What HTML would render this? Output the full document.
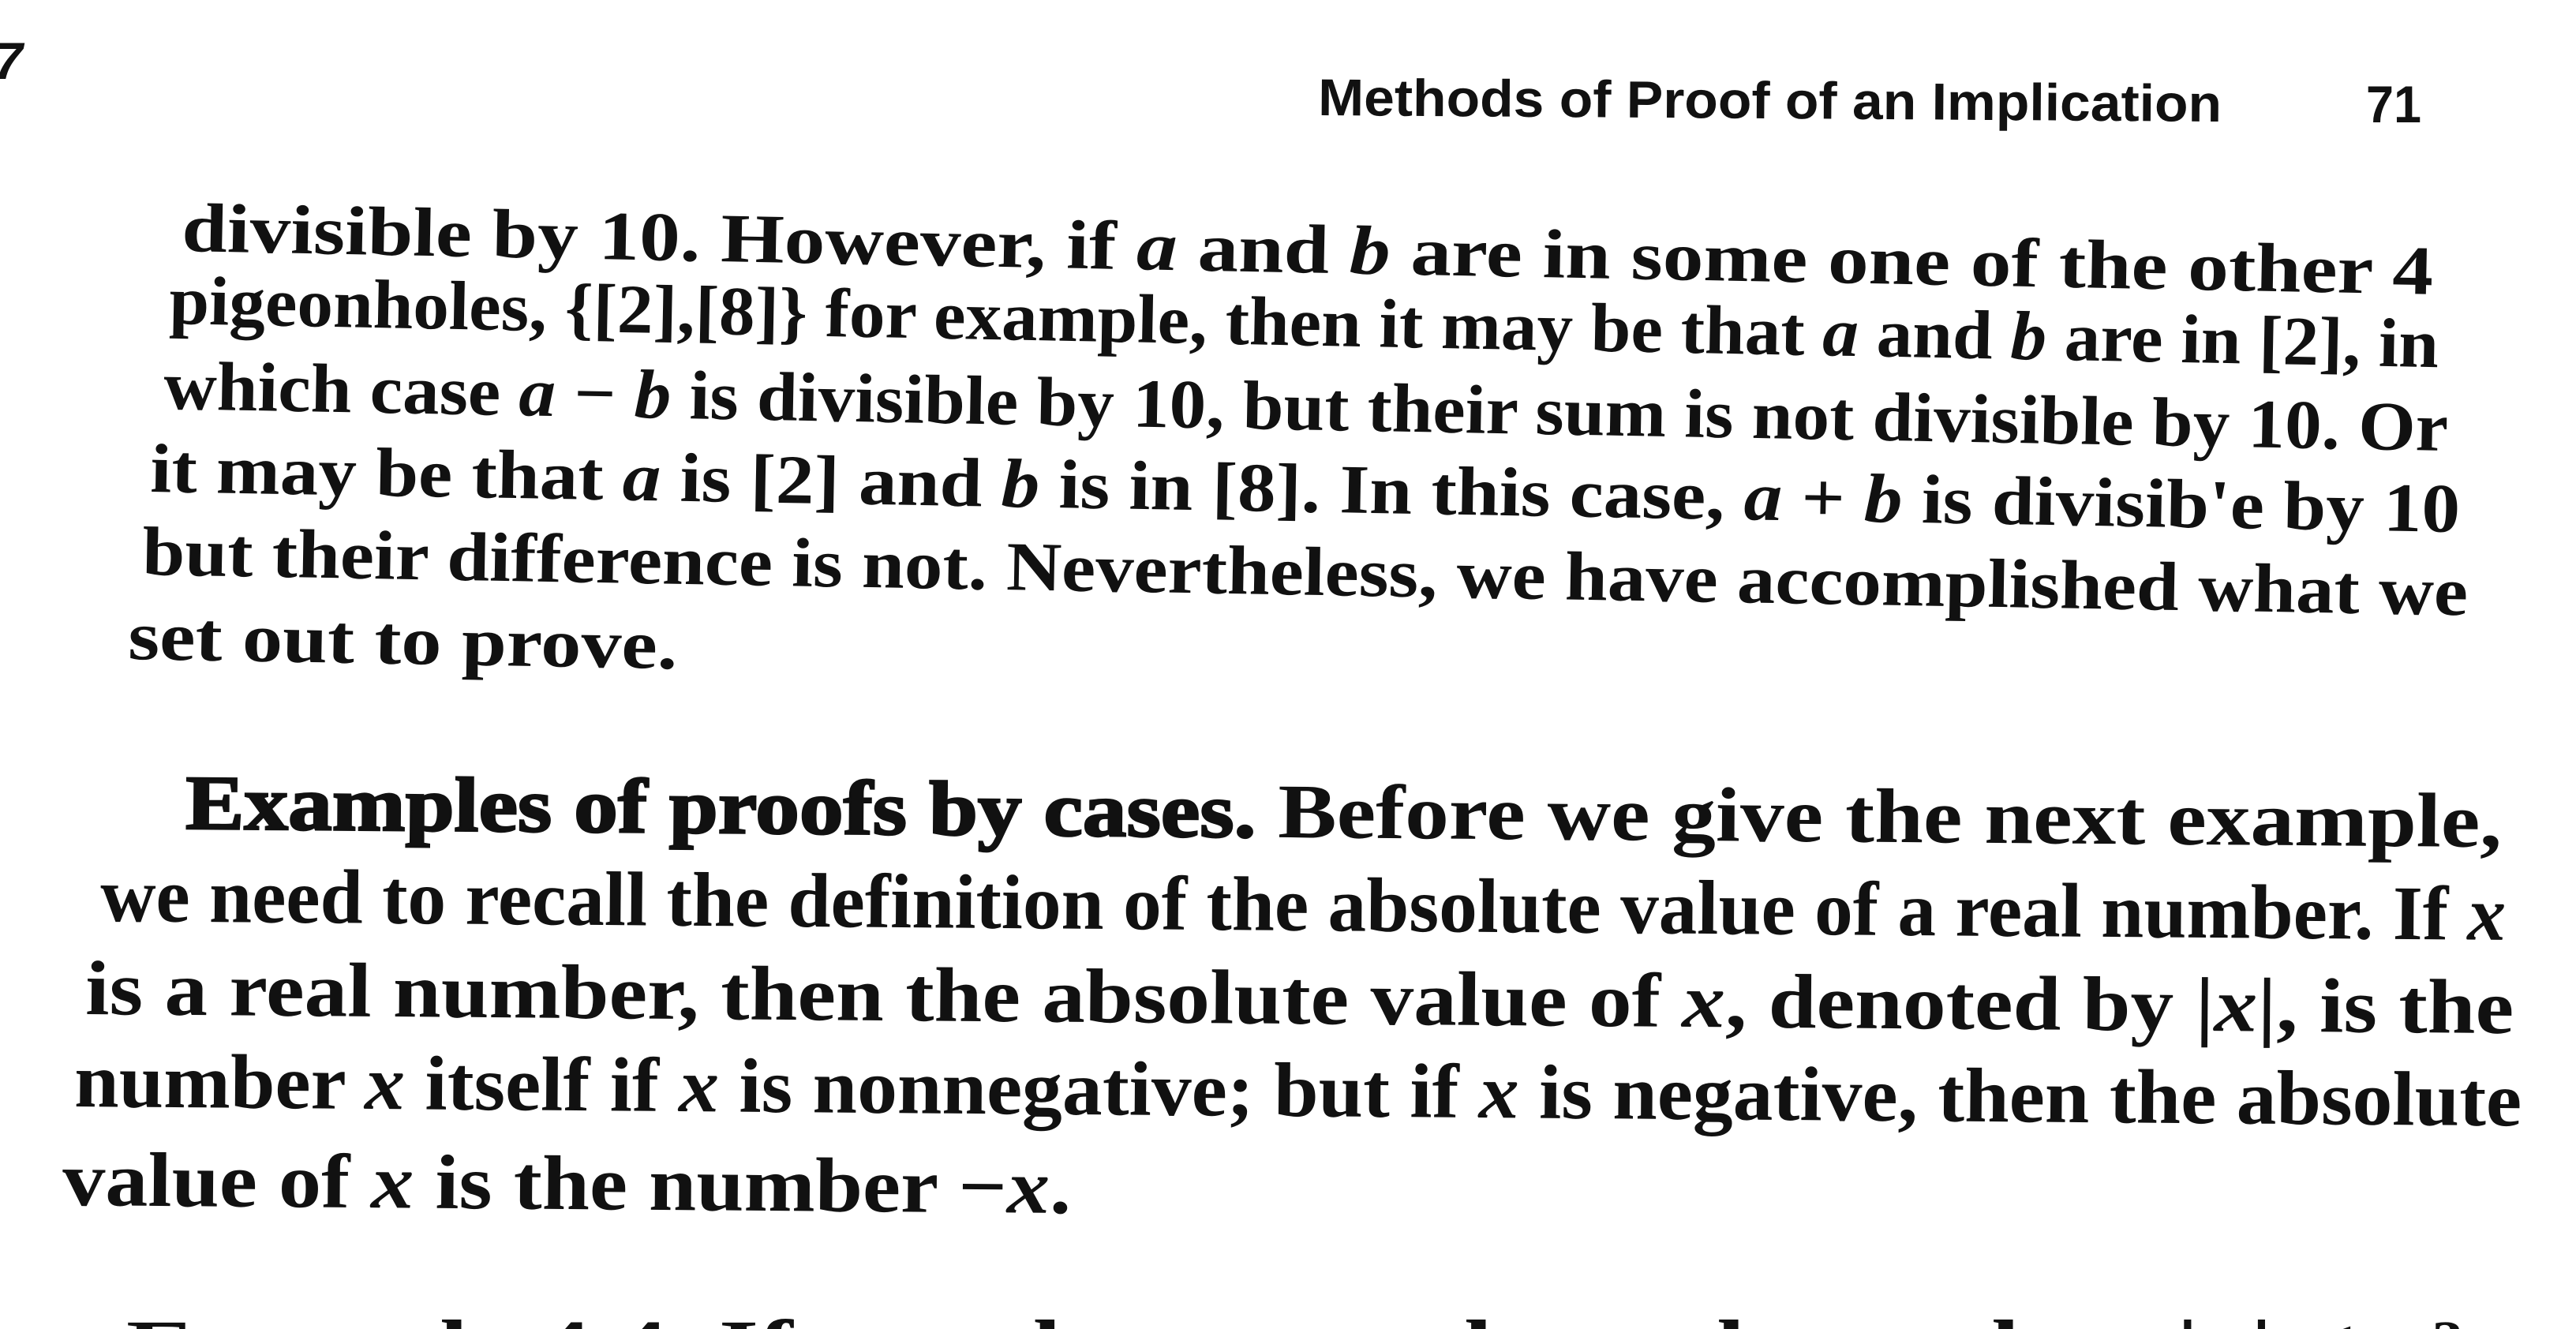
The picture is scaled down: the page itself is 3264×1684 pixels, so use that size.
<!DOCTYPE html>
<html><head><meta charset="utf-8"><style>
html,body{margin:0;padding:0;background:#fff;}
body{width:3264px;height:1684px;overflow:hidden;}
svg{display:block;}
.s{font-family:"Liberation Serif",serif;font-weight:bold;fill:#111;}
.p1{font-size:88px;}
.p2{font-size:98px;}
.h{font-family:"Liberation Sans",sans-serif;font-weight:bold;font-size:66px;fill:#111;}
.i{font-style:italic;}
</style></head><body>
<svg width="3264" height="1684" viewBox="0 0 3264 1684" xmlns="http://www.w3.org/2000/svg">
<text class="h" x="-8" y="100" font-size="96" font-style="italic">7</text>
<text class="h" x="1670" y="146" textLength="1145" lengthAdjust="spacingAndGlyphs" transform="rotate(0.4 1670 146)">Methods of Proof of an Implication</text>
<text class="h" x="2998" y="155" textLength="70" lengthAdjust="spacingAndGlyphs">71</text>

<g class="s p1">
<text x="230" y="318" textLength="2853" lengthAdjust="spacingAndGlyphs" transform="rotate(1.1 230 318)">divisible by 10. However, if <tspan class="i">a</tspan> and <tspan class="i">b</tspan> are in some one of the other 4</text>
<text x="214" y="410" textLength="2876" lengthAdjust="spacingAndGlyphs" transform="rotate(1.1 214 410)">pigeonholes, {[2],[8]} for example, then it may be that <tspan class="i">a</tspan> and <tspan class="i">b</tspan> are in [2], in</text>
<text x="207" y="518" textLength="2895" lengthAdjust="spacingAndGlyphs" transform="rotate(1.05 207 518)">which case <tspan class="i">a</tspan> − <tspan class="i">b</tspan> is divisible by 10, but their sum is not divisible by 10. Or</text>
<text x="190" y="623" textLength="2927" lengthAdjust="spacingAndGlyphs" transform="rotate(1.0 190 623)">it may be that <tspan class="i">a</tspan> is [2] and <tspan class="i">b</tspan> is in [8]. In this case, <tspan class="i">a</tspan> + <tspan class="i">b</tspan> is divisib'e by 10</text>
<text x="180" y="728" textLength="2947" lengthAdjust="spacingAndGlyphs" transform="rotate(1.0 180 728)">but their difference is not. Nevertheless, we have accomplished what we</text>
<text x="162" y="835" textLength="696" lengthAdjust="spacingAndGlyphs" transform="rotate(1.0 162 835)">set out to prove.</text>
</g>

<g class="s p2">
<text x="235" y="1050" textLength="2935" lengthAdjust="spacingAndGlyphs" transform="rotate(0.45 235 1050)"><tspan stroke="#111" stroke-width="2.5">Examples of proofs by cases.</tspan>    Before we give the next example,</text>
<text x="127" y="1167" textLength="3048" lengthAdjust="spacingAndGlyphs" transform="rotate(0.45 127 1167)">we need to recall the definition of the absolute value of a real number. If <tspan class="i">x</tspan></text>
<text x="108" y="1285" textLength="3077" lengthAdjust="spacingAndGlyphs" transform="rotate(0.45 108 1285)">is a real number, then the absolute value of <tspan class="i">x</tspan>, denoted by |<tspan class="i">x</tspan>|, is the</text>
<text x="94" y="1402" textLength="3101" lengthAdjust="spacingAndGlyphs" transform="rotate(0.45 94 1402)">number <tspan class="i">x</tspan> itself if <tspan class="i">x</tspan> is nonnegative; but if <tspan class="i">x</tspan> is negative, then the absolute</text>
<text x="79" y="1527" textLength="1278" lengthAdjust="spacingAndGlyphs" transform="rotate(0.45 79 1527)">value of <tspan class="i">x</tspan> is the number −<tspan class="i">x</tspan>.</text>
<text x="160" y="1740" textLength="2960" lengthAdjust="spacingAndGlyphs">Example 4.4. If <tspan class="i">x</tspan> and <tspan class="i">y</tspan> are real numbers, then |<tspan class="i">x</tspan>| ≤ <tspan class="i">x</tspan>²</text>
</g>
</svg>
</body></html>
